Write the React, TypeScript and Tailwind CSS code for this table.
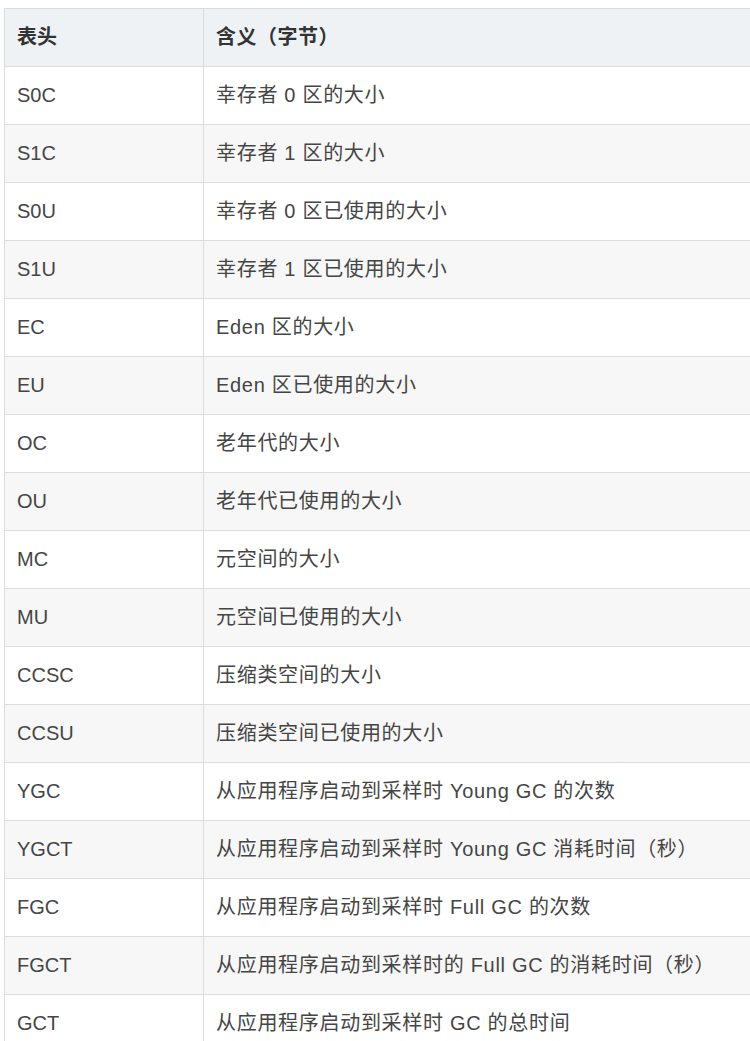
import React from "react";

const rows: [string, string][] = [
  ["S0C", "幸存者 0 区的大小"],
  ["S1C", "幸存者 1 区的大小"],
  ["S0U", "幸存者 0 区已使用的大小"],
  ["S1U", "幸存者 1 区已使用的大小"],
  ["EC", "Eden 区的大小"],
  ["EU", "Eden 区已使用的大小"],
  ["OC", "老年代的大小"],
  ["OU", "老年代已使用的大小"],
  ["MC", "元空间的大小"],
  ["MU", "元空间已使用的大小"],
  ["CCSC", "压缩类空间的大小"],
  ["CCSU", "压缩类空间已使用的大小"],
  ["YGC", "从应用程序启动到采样时 Young GC 的次数"],
  ["YGCT", "从应用程序启动到采样时 Young GC 消耗时间（秒）"],
  ["FGC", "从应用程序启动到采样时 Full GC 的次数"],
  ["FGCT", "从应用程序启动到采样时的 Full GC 的消耗时间（秒）"],
  ["GCT", "从应用程序启动到采样时 GC 的总时间"],
];

export default function App() {
  return (
    <div
      className="w-[750px] h-[1041px] overflow-hidden bg-white pt-[8px] pl-[4px]"
      style={{ fontFamily: '"Liberation Sans", "Noto Sans CJK SC", sans-serif' }}
    >
      <table className="w-[800px] border-collapse text-[20px] text-[#454545]">
        <thead>
          <tr className="bg-[#eef2f5]">
            <th className="w-[199px] border border-[#dcdcdc] px-[12px] py-[15px] leading-[27px] text-left font-bold text-[#333]">
              表头
            </th>
            <th className="border border-[#dcdcdc] px-[12px] py-[15px] leading-[27px] text-left font-bold text-[#333] tracking-[0.5px]">
              含义（字节）
            </th>
          </tr>
        </thead>
        <tbody>
          {rows.map(([k, v], i) => (
            <tr key={k} className={i % 2 === 1 ? "bg-[#f7f7f7]" : "bg-white"}>
              <td className="border border-[#dcdcdc] px-[12px] py-[15px] leading-[27px]">{k}</td>
              <td className="border border-[#dcdcdc] px-[12px] py-[15px] leading-[27px] tracking-[0.7px]">{v}</td>
            </tr>
          ))}
        </tbody>
      </table>
    </div>
  );
}
